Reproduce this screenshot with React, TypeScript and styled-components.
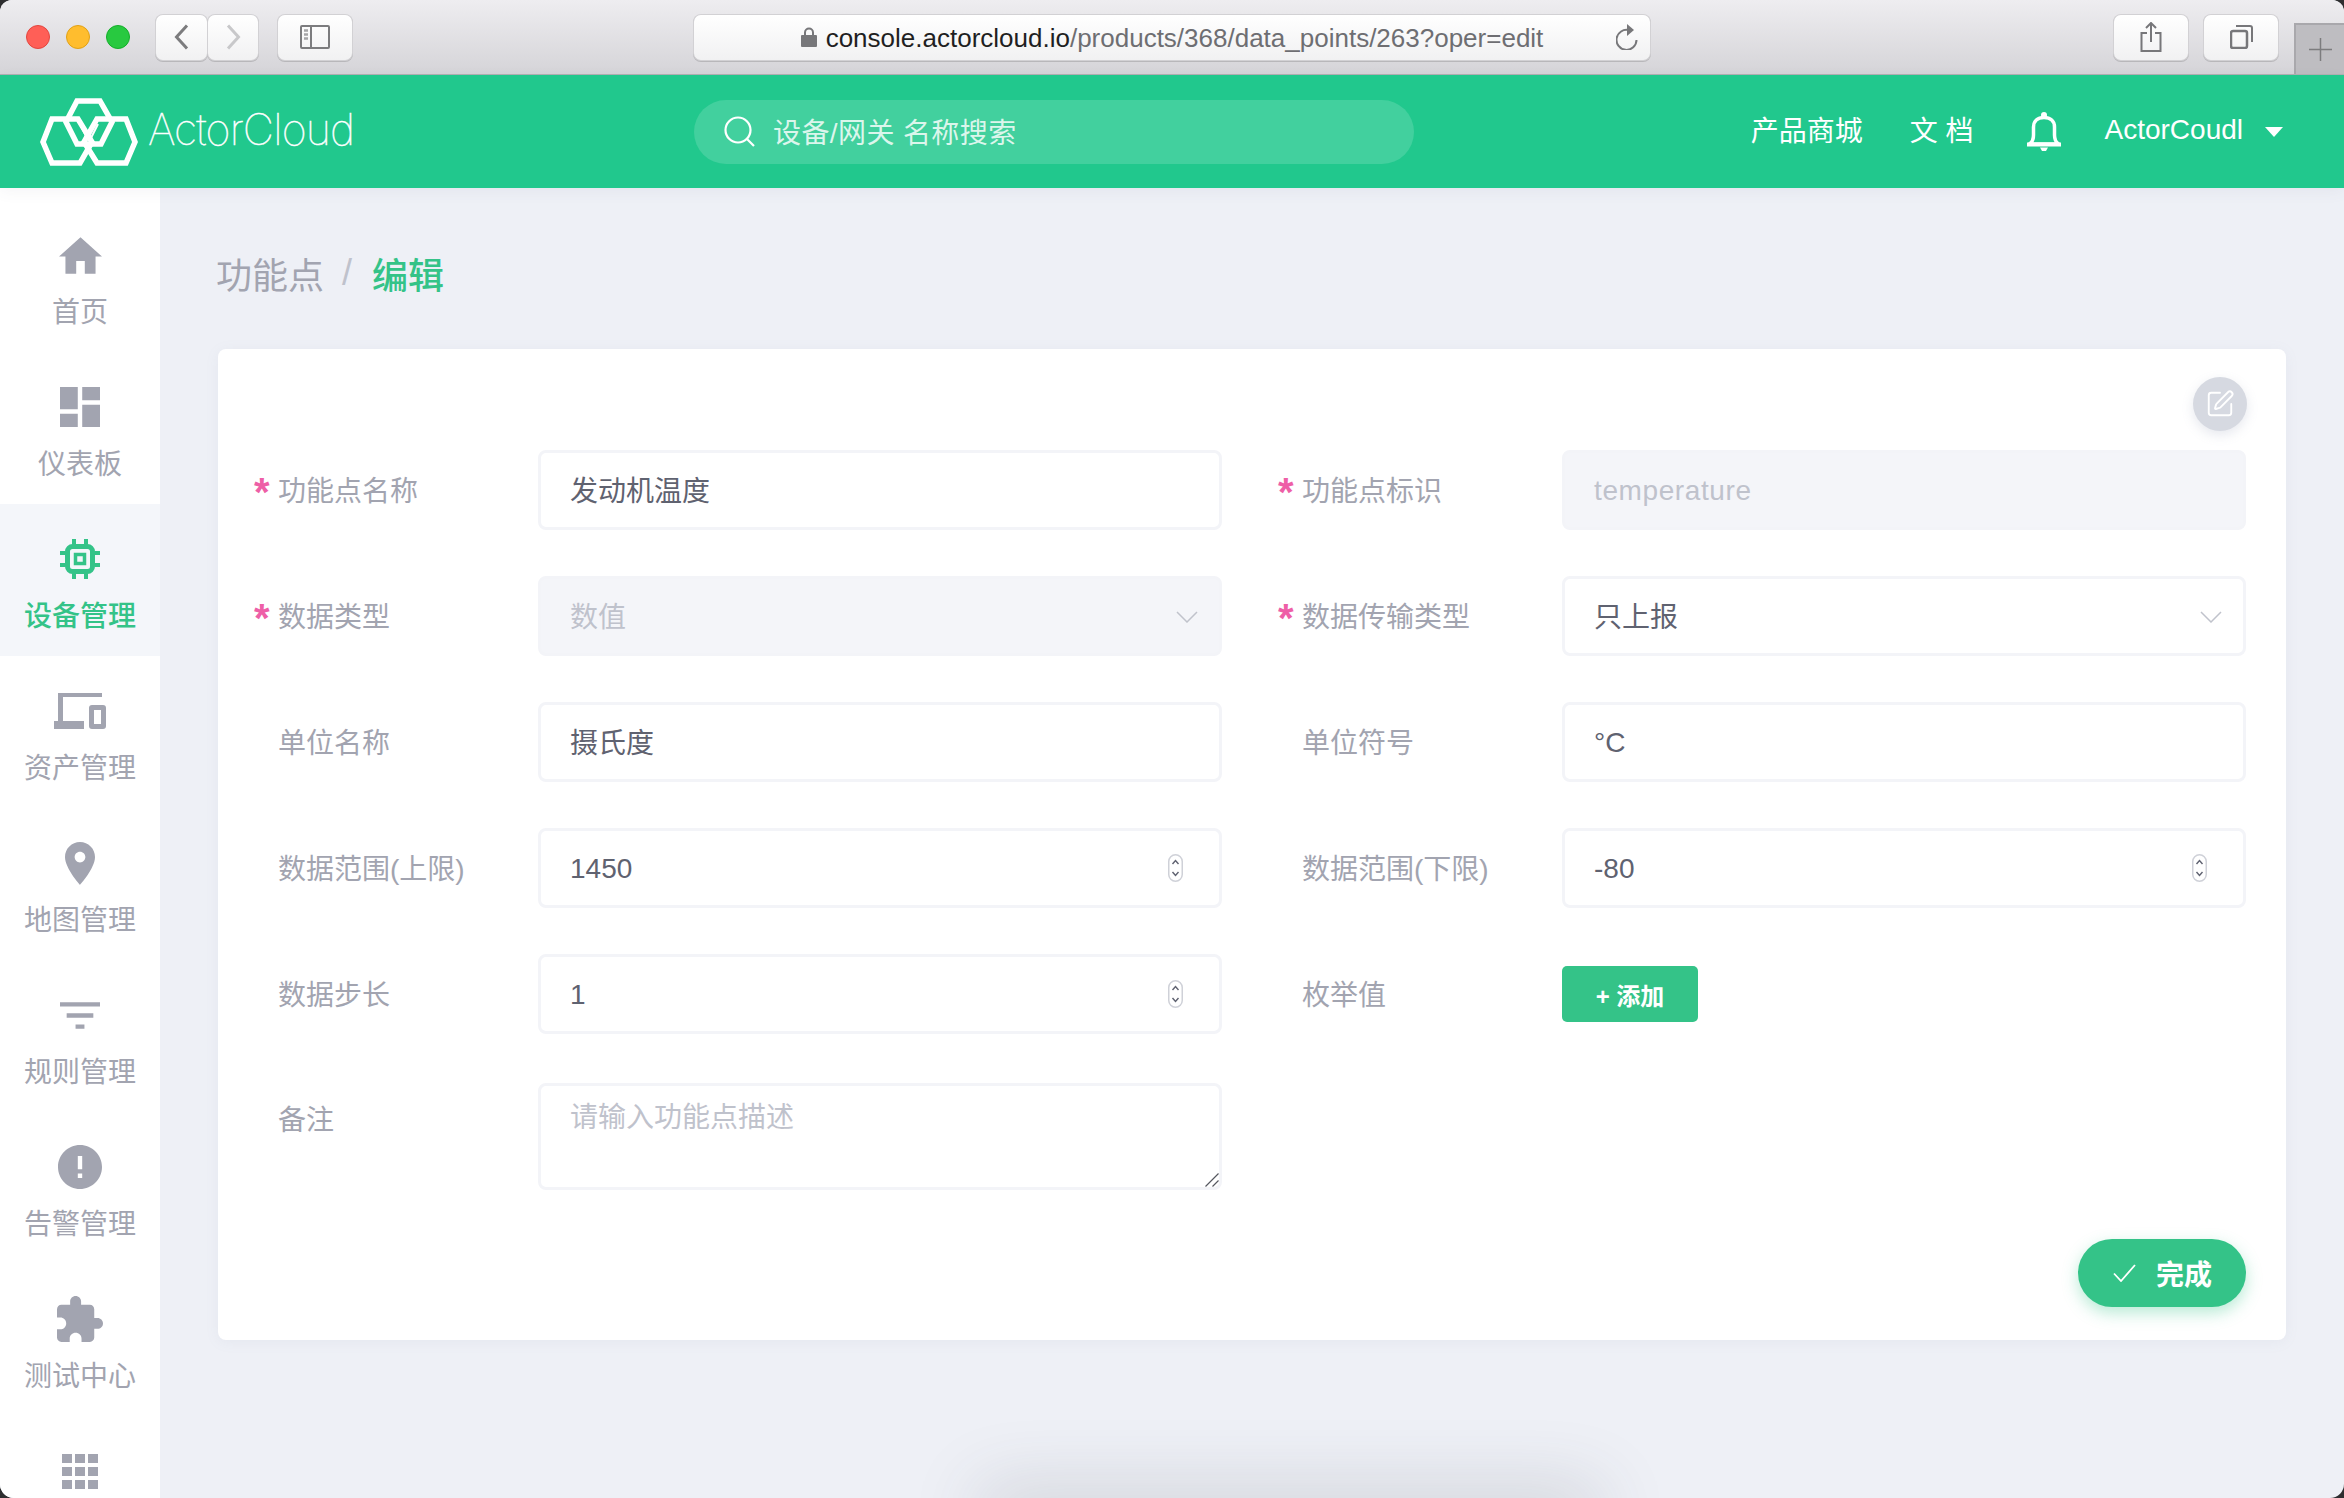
import React from 'react'
import styled, { createGlobalStyle } from 'styled-components'
import { SquarePen } from 'lucide-react'

const GlobalStyle = createGlobalStyle`
    html, body {
        margin: 0;
        padding: 0;
        background: #2e2e30;
    }
    body {
        font-family: "Liberation Sans", "Noto Sans CJK SC", sans-serif;
    }
`

const nav_items = [
    { label: '首页', w: 43, h: 37, box: '2 3 20 17', d: 'M10 20v-6h4v6h5v-8h3L12 3 2 12h3v8z' },
    { label: '仪表板', w: 40, h: 40, box: '3 3 18 18', d: 'M3 13h8V3H3v10zm0 8h8v-6H3v6zm10 0h8V11h-8v10zm0-18v6h8V3h-8z' },
    { label: '设备管理', chip: true, active: true },
    { label: '资产管理', w: 52, h: 36, box: '0 0 52 36', d: 'M4 0h44v4H9v24h21v8H0v-8h4zM38 12h11a3 3 0 0 1 3 3v18a3 3 0 0 1-3 3H38a3 3 0 0 1-3-3V15a3 3 0 0 1 3-3zm2 5v14h7V17z' },
    { label: '地图管理', w: 30, h: 43, box: '5 2 14 20', d: 'M12 2C8.13 2 5 5.13 5 9c0 5.25 7 13 7 13s7-7.75 7-13c0-3.87-3.13-7-7-7zm0 9.5c-1.38 0-2.5-1.12-2.5-2.5s1.12-2.5 2.5-2.5 2.5 1.12 2.5 2.5-1.12 2.5-2.5 2.5z' },
    { label: '规则管理', w: 40, h: 27, box: '3 6 18 12', d: 'M10 18h4v-2h-4v2zM3 6v2h18V6H3zm3 7h12v-2H6v2z' },
    { label: '告警管理', w: 44, h: 44, box: '2 2 20 20', d: 'M12 2C6.48 2 2 6.48 2 12s4.48 10 10 10 10-4.48 10-10S17.52 2 12 2zm1 15h-2v-2h2v2zm0-4h-2V7h2v6z' },
    { label: '测试中心', w: 46, h: 46, box: '2 1 21 21', d: 'M20.5 11H19V7c0-1.1-.9-2-2-2h-4V3.5C13 2.12 11.88 1 10.5 1S8 2.12 8 3.5V5H4c-1.1 0-1.99.9-1.99 2v3.8H3.5c1.49 0 2.7 1.21 2.7 2.7s-1.21 2.7-2.7 2.7H2V20c0 1.1.9 2 2 2h3.8v-1.5c0-1.49 1.21-2.7 2.7-2.7 1.49 0 2.7 1.21 2.7 2.7V22H17c1.1 0 2-.9 2-2v-4h1.5c1.38 0 2.5-1.12 2.5-2.5S21.88 11 20.5 11z' },
    { label: '', w: 36, h: 35, box: '0 0 36 35', d: 'M0 0h10v9H0zM13 0h10v9H13zM26 0h10v9H26zM0 13h10v9H0zM13 13h10v9H13zM26 13h10v9H26zM0 26h10v9H0zM13 26h10v9H13zM26 26h10v9H26z' },
]

function Chip_Icon() {
    return (
        <svg width="40" height="40" viewBox="0 0 40 40" fill="none" stroke="currentColor">
            <rect x="7.5" y="7.5" width="25" height="25" rx="5" strokeWidth="5" />
            <rect x="15.5" y="15.5" width="9" height="9" strokeWidth="3.5" />
            <path d="M14 0v5M26 0v5M14 35v5M26 35v5M0 14h5M0 26h5M35 14h5M35 26h5" strokeWidth="4" />
        </svg>
    )
}

function Logo_Mark() {
    return (
        <svg width="98" height="68" viewBox="0 0 98 68" fill="none" stroke="#ffffff" strokeWidth="5.500">
            <path d="M37 3h23l12 21-11 22H37L26 24z" />
            <path d="M12 21h26l14 23-12 21H12L3 44z" />
            <path d="M57 21h29l9 23-9 21H57L44 44z" />
            <path d="M40 26l8 16M58 26l-8 16" strokeWidth="2" />
        </svg>
    )
}

function Spin_Icon() {
    return (
        <Spinner width="15" height="28" viewBox="0 0 15 28" fill="none">
            <rect x="0.75" y="0.75" width="13.5" height="26.5" rx="6.75" fill="#ffffff" stroke="#cfd1d8" strokeWidth="1.500" />
            <path d="M4.500 10l3-3.500 3 3.500M4.500 18l3 3.500 3-3.500" stroke="#5f6270" strokeWidth="1.400" />
        </Spinner>
    )
}

function Arrow_Icon() {
    return (
        <Arrow width="22" height="12" viewBox="0 0 22 12" fill="none">
            <path d="M1 1l10 10L21 1" stroke="#c0c3cc" strokeWidth="1.500" />
        </Arrow>
    )
}

function Form_Item({ label, required, children }: { label: string; required?: boolean; children: React.ReactNode }) {
    return (
        <Item>
            <Label>
                <Star>{required ? '*' : ''}</Star>
                {label}
            </Label>
            {children}
        </Item>
    )
}

export default function App() {
    return (
        <>
            <GlobalStyle />
            <Window>
                <Title_Bar>
                    <Lights>
                        <Light $color="#ff5f57" $edge="#e2463f" />
                        <Light $color="#ffbd2e" $edge="#e1a116" />
                        <Light $color="#28c940" $edge="#14ae2a" />
                    </Lights>
                    <Nav_Buttons>
                        <Chrome_Button $width={51}>
                            <svg width="15" height="26" viewBox="0 0 15 26" fill="none" stroke="#7c7c7e" strokeWidth="3"><path d="M13 1.500L2.500 13 13 24.500" /></svg>
                        </Chrome_Button>
                        <Chrome_Button $width={50}>
                            <svg width="15" height="26" viewBox="0 0 15 26" fill="none" stroke="#c8c8ca" strokeWidth="3"><path d="M2 1.500L12.500 13 2 24.500" /></svg>
                        </Chrome_Button>
                    </Nav_Buttons>
                    <Sidebar_Toggle $width={74}>
                        <svg width="30" height="24" viewBox="0 0 30 24" fill="none" stroke="#7c7c7e" strokeWidth="2">
                            <rect x="1" y="1" width="28" height="22" rx="1" />
                            <path d="M11 1v22" />
                            <path d="M4 5.500h4M4 9.500h4M4 13.500h4" strokeWidth="2.500" stroke="#a5a5a7" />
                        </svg>
                    </Sidebar_Toggle>
                    <Url_Bar>
                        <svg width="16" height="20" viewBox="0 0 16 20" fill="#77777a">
                            <path d="M3 8V5.500a5 5 0 0 1 10 0V8h2a1 1 0 0 1 1 1v10a1 1 0 0 1-1 1H1a1 1 0 0 1-1-1V9a1 1 0 0 1 1-1zm2 0h6V5.500a3 3 0 0 0-6 0z" />
                        </svg>
                        <Url_Text><b>console.actorcloud.io</b>/products/368/data_points/263?oper=edit</Url_Text>
                        <Reload width="22" height="26" viewBox="0 0 22 26" fill="none" stroke="#77777a" strokeWidth="2">
                            <path d="M13 6.200A10 10 0 1 0 20.500 16" />
                            <path d="M11 0l7 6-7 6z" fill="#77777a" stroke="none" />
                        </Reload>
                    </Url_Bar>
                    <Share_Button $width={74}>
                        <svg width="22" height="30" viewBox="0 0 22 30" fill="none" stroke="#77777a" strokeWidth="2">
                            <path d="M7 11H1.500v18h19V11H15M11 20V1.500M6 6l5-5 5 5" />
                        </svg>
                    </Share_Button>
                    <Tabs_Button $width={74}>
                        <svg width="23" height="24" viewBox="0 0 23 24" fill="none" stroke="#77777a" strokeWidth="2">
                            <rect x="1" y="6" width="16" height="17" rx="2" strokeWidth="2.500" />
                            <path d="M6 1h14a2 2 0 0 1 2 2v14" />
                        </svg>
                    </Tabs_Button>
                    <New_Tab>
                        <svg width="23" height="23" viewBox="0 0 23 23" stroke="#7c7c7e" strokeWidth="1.500"><path d="M11.500 0v23M0 11.500h23" /></svg>
                    </New_Tab>
                </Title_Bar>

                <Header>
                    <Logo>
                        <Logo_Mark />
                        <Logo_Text>ActorCloud</Logo_Text>
                    </Logo>
                    <Search>
                        <svg width="31" height="31" viewBox="0 0 31 31" fill="none" stroke="#ffffff" strokeWidth="2.200">
                            <circle cx="14" cy="14" r="12.500" />
                            <path d="M23 23l7 7" />
                        </svg>
                        <Search_Text>设备/网关 名称搜索</Search_Text>
                    </Search>
                    <Header_Right>
                        <Header_Link>产品商城</Header_Link>
                        <Header_Link $gap={47}>文 档</Header_Link>
                        <Bell width="34" height="39" viewBox="0 0 34 39" fill="none" stroke="#ffffff" strokeWidth="3.500">
                            <path d="M2.500 32c3-2 4-4 4-9v-8C6.500 9 10.500 5.500 17 5.500S27.500 9 27.500 15v8c0 5 1 7 4 9z" />
                            <path d="M0 32.500h34" strokeWidth="4" />
                            <circle cx="17" cy="3" r="3" fill="#ffffff" stroke="none" />
                            <path d="M13 35.500h8l-2 3.500h-4z" fill="#ffffff" stroke="none" />
                        </Bell>
                        <User_Name>ActorCoudl</User_Name>
                        <Caret />
                    </Header_Right>
                </Header>

                <Body>
                    <Sidebar>
                        {nav_items.map((item, i) => (
                            <Nav_Item key={i} $active={item.active}>
                                <Nav_Icon>
                                    {item.chip ? <Chip_Icon /> : (
                                        <svg width={item.w} height={item.h} viewBox={item.box} fill="currentColor" fillRule="evenodd">
                                            <path d={item.d} />
                                        </svg>
                                    )}
                                </Nav_Icon>
                                <Nav_Label>{item.label}</Nav_Label>
                            </Nav_Item>
                        ))}
                    </Sidebar>

                    <Main>
                        <Breadcrumb>
                            <span>功能点</span>
                            <Crumb_Sep>/</Crumb_Sep>
                            <Crumb_Current>编辑</Crumb_Current>
                        </Breadcrumb>
                        <Card>
                            <Edit_Circle><SquarePen size={30} strokeWidth={1.5} color="#ffffff" /></Edit_Circle>
                            <Form_Grid>
                                <Form_Item label="功能点名称" required>
                                    <Field>发动机温度</Field>
                                </Form_Item>
                                <Form_Item label="功能点标识" required>
                                    <Field $disabled $latin>temperature</Field>
                                </Form_Item>
                                <Form_Item label="数据类型" required>
                                    <Field $disabled>数值<Arrow_Icon /></Field>
                                </Form_Item>
                                <Form_Item label="数据传输类型" required>
                                    <Field>只上报<Arrow_Icon /></Field>
                                </Form_Item>
                                <Form_Item label="单位名称">
                                    <Field>摄氏度</Field>
                                </Form_Item>
                                <Form_Item label="单位符号">
                                    <Field $latin>°C</Field>
                                </Form_Item>
                                <Form_Item label="数据范围(上限)">
                                    <Field $latin>1450<Spin_Icon /></Field>
                                </Form_Item>
                                <Form_Item label="数据范围(下限)">
                                    <Field $latin>-80<Spin_Icon /></Field>
                                </Form_Item>
                                <Form_Item label="数据步长">
                                    <Field $latin>1<Spin_Icon /></Field>
                                </Form_Item>
                                <Form_Item label="枚举值">
                                    <Add_Button>+ 添加</Add_Button>
                                </Form_Item>
                                <Note_Item>
                                    <Form_Item label="备注">
                                        <Text_Area>
                                            请输入功能点描述
                                            <Grip width="14" height="14" viewBox="0 0 14 14" stroke="#55575f" strokeWidth="1.200" fill="none">
                                                <path d="M0.500 13.500L13.500 0.500M7.500 13.500L13.500 7.500" />
                                            </Grip>
                                        </Text_Area>
                                    </Form_Item>
                                </Note_Item>
                            </Form_Grid>
                            <Card_Footer>
                                <Done_Button>
                                    <svg width="23" height="18" viewBox="0 0 23 18" fill="none" stroke="#ffffff" strokeWidth="1.800"><path d="M1 9.500L8 17 22 1" /></svg>
                                    完成
                                </Done_Button>
                            </Card_Footer>
                        </Card>
                    </Main>
                </Body>
                <Edge_Shadow />
            </Window>
        </>
    )
}

const Window = styled.div`
    position: relative;
    width: 2344px;
    height: 1498px;
    overflow: hidden;
    display: flex;
    flex-direction: column;
    border-radius: 12px 12px 14px 14px;
    background: #eef0f6;
`

const Title_Bar = styled.div`
    height: 75px;
    flex: none;
    display: flex;
    align-items: center;
    padding-left: 26px;
    box-sizing: border-box;
    background: linear-gradient(#eeedf0, #d5d4d8);
    border-bottom: 1px solid #b1afb3;
`

const Lights = styled.div`
    display: flex;
    gap: 16px;
`

const Light = styled.div<{ $color: string; $edge: string }>`
    width: 24px;
    height: 24px;
    box-sizing: border-box;
    border-radius: 50%;
    background: ${p => p.$color};
    border: 1px solid ${p => p.$edge};
`

const Nav_Buttons = styled.div`
    display: flex;
    gap: 1px;
    margin-left: 26px;
`

const Chrome_Button = styled.div<{ $width: number }>`
    width: ${p => p.$width}px;
    height: 45px;
    box-sizing: border-box;
    display: flex;
    align-items: center;
    justify-content: center;
    border-radius: 7px;
    background: linear-gradient(#ffffff, #f1f1f2);
    box-shadow: 0 0 0 1px #d2d1d4, 0 1px 0 1px #b8b7ba;
`

const Sidebar_Toggle = styled(Chrome_Button)`
    margin-left: 20px;
`

const Url_Bar = styled(Chrome_Button).attrs({ $width: 956 })`
    position: relative;
    margin-left: 342px;
    gap: 9px;
`

const Url_Text = styled.div`
    font-size: 26px;
    margin-top: 2px;
    color: #6e6e72;
    b {
        font-weight: 400;
        color: #1f1f22;
    }
`

const Reload = styled.svg`
    position: absolute;
    right: 12px;
    top: 9px;
`

const Share_Button = styled(Chrome_Button)`
    margin-left: 464px;
`

const Tabs_Button = styled(Chrome_Button)`
    margin-left: 16px;
`

const New_Tab = styled.div`
    align-self: flex-end;
    width: 50px;
    height: 51px;
    margin-left: 16px;
    box-sizing: border-box;
    display: flex;
    align-items: center;
    justify-content: center;
    background: #bebdc1;
    border-top: 2px solid #a9a8ac;
    border-left: 2px solid #a9a8ac;
`

const Header = styled.div`
    height: 113px;
    flex: none;
    display: flex;
    align-items: center;
    background: #21c88d;
    color: #ffffff;
    box-shadow: 0 4px 14px rgba(80, 90, 120, 0.06);
    position: relative;
    z-index: 1;
`

const Logo = styled.div`
    width: 694px;
    flex: none;
    box-sizing: border-box;
    padding-left: 40px;
    display: flex;
    align-items: center;
    gap: 10px;
`

const Logo_Text = styled.div`
    font-family: "Inter", sans-serif;
    font-weight: 100;
    font-size: 43px;
    letter-spacing: -0.8px;
    line-height: 50px;
    margin-bottom: 6px;
    -webkit-text-stroke: 0.5px #ffffff;
`

const Search = styled.div`
    width: 720px;
    height: 64px;
    flex: none;
    box-sizing: border-box;
    padding-left: 30px;
    display: flex;
    align-items: center;
    gap: 18px;
    border-radius: 32px;
    background: rgba(255, 255, 255, 0.15);
    font-size: 28px;
    color: rgba(255, 255, 255, 0.82);
`

const Search_Text = styled.span`
    margin-bottom: 2px;
    letter-spacing: 0.4px;
`

const Header_Right = styled.div`
    margin-left: auto;
    padding-right: 61px;
    display: flex;
    align-items: center;
`

const Header_Link = styled.div<{ $gap?: number }>`
    font-size: 28px;
    margin-left: ${p => p.$gap ?? 0}px;
    margin-bottom: 5px;
`

const Bell = styled.svg`
    margin-left: 54px;
`

const User_Name = styled.div`
    font-size: 28px;
    margin-left: 43px;
    margin-bottom: 3px;
`

const Caret = styled.div`
    margin-left: 22px;
    width: 0;
    height: 0;
    border-left: 9px solid transparent;
    border-right: 9px solid transparent;
    border-top: 10px solid #ffffff;
`

const Body = styled.div`
    flex: 1;
    display: flex;
    min-height: 0;
`

const Sidebar = styled.div`
    width: 160px;
    flex: none;
    padding-top: 12px;
    background: #ffffff;
    overflow: hidden;
`

const Nav_Item = styled.div<{ $active?: boolean }>`
    height: 152px;
    box-sizing: border-box;
    padding-top: 31px;
    display: flex;
    flex-direction: column;
    align-items: center;
    color: ${p => (p.$active ? '#34c388' : '#a2a4b0')};
    background: ${p => (p.$active ? '#f4f6fa' : 'transparent')};
    font-weight: ${p => (p.$active ? 500 : 400)};
`

const Nav_Icon = styled.div`
    height: 48px;
    display: flex;
    align-items: center;
    justify-content: center;
`

const Nav_Label = styled.div`
    margin-top: 16px;
    font-size: 28px;
    line-height: 36px;
`

const Main = styled.div`
    flex: 1;
    min-width: 0;
    padding: 0 58px;
`

const Breadcrumb = styled.div`
    margin: 60px 0 51px -2px;
    height: 50px;
    display: flex;
    align-items: center;
    font-size: 36px;
    color: #a2a4b0;
`

const Crumb_Sep = styled.span`
    margin: 0 20px 0 18px;
    color: #bfc2cc;
`

const Crumb_Current = styled.span`
    color: #34c388;
    font-weight: 500;
`

const Card = styled.div`
    position: relative;
    box-sizing: border-box;
    padding: 101px 40px 32px 36px;
    height: 991px;
    border-radius: 8px;
    background: #ffffff;
    box-shadow: 0 2px 14px rgba(130, 140, 170, 0.08);
`

const Edit_Circle = styled.div`
    position: absolute;
    top: 28px;
    right: 39px;
    width: 54px;
    height: 54px;
    display: flex;
    align-items: center;
    justify-content: center;
    border-radius: 50%;
    background: #d6d9e1;
    box-shadow: 0 4px 12px rgba(130, 140, 170, 0.2);
`

const Form_Grid = styled.div`
    display: grid;
    grid-template-columns: 968px 968px;
    column-gap: 56px;
    row-gap: 46px;
`

const Item = styled.div`
    display: flex;
    align-items: center;
    min-height: 80px;
`

const Label = styled.div`
    width: 284px;
    flex: none;
    display: flex;
    align-items: center;
    height: 78px;
    padding-bottom: 2px;
    align-self: flex-start;
    font-size: 28px;
    color: #a2a4b0;
`

const Star = styled.span`
    width: 24px;
    flex: none;
    margin-top: 6px;
    font-family: "Liberation Sans", sans-serif;
    font-weight: 700;
    font-size: 40px;
    line-height: 1;
    color: #ee5fa7;
`

const Field = styled.div<{ $disabled?: boolean; $latin?: boolean }>`
    position: relative;
    flex: 1;
    height: 80px;
    box-sizing: border-box;
    padding: ${p => (p.$latin ? 1 : 0)}px 29px ${p => (p.$latin ? 0 : 2)}px;
    display: flex;
    align-items: center;
    font-size: 28px;
    letter-spacing: ${p => (p.$disabled && p.$latin ? '0.6px' : '0')};
    border: 3px solid #f3f4f8;
    border-radius: 8px;
    color: ${p => (p.$disabled ? '#bfc2cc' : '#5f6270')};
    background: ${p => (p.$disabled ? '#f4f5f9' : '#ffffff')};
`

const Spinner = styled.svg`
    position: absolute;
    right: 36px;
    top: 23px;
`

const Arrow = styled.svg`
    position: absolute;
    right: 21px;
    top: 32px;
`

const Add_Button = styled.div`
    width: 136px;
    height: 56px;
    display: flex;
    align-items: center;
    justify-content: center;
    border-radius: 5px;
    background: #34c388;
    color: #ffffff;
    font-size: 24px;
    font-weight: 700;
`

const Note_Item = styled.div`
    grid-column: 1;
    margin-top: 3px;
    ${Label} {
        height: 70px;
    }
`

const Text_Area = styled.div`
    position: relative;
    flex: 1;
    height: 107px;
    box-sizing: border-box;
    padding: 13px 29px;
    font-size: 28px;
    line-height: 38px;
    border: 3px solid #f3f4f8;
    border-radius: 8px;
    color: #bfc2cc;
`

const Grip = styled.svg`
    position: absolute;
    right: 0;
    bottom: 0;
`

const Card_Footer = styled.div`
    display: flex;
    justify-content: flex-end;
    margin-top: 49px;
`

const Done_Button = styled.div`
    width: 168px;
    height: 68px;
    box-sizing: border-box;
    padding-left: 35px;
    display: flex;
    align-items: center;
    gap: 20px;
    border-radius: 34px;
    background: #34c388;
    color: #ffffff;
    font-size: 28px;
    font-weight: 700;
    box-shadow: 0 6px 16px rgba(52, 195, 136, 0.35);
`

const Edge_Shadow = styled.div`
    position: absolute;
    left: 990px;
    bottom: -30px;
    width: 600px;
    height: 30px;
    box-shadow: 0 0 70px 10px rgba(60, 64, 80, 0.18);
`
